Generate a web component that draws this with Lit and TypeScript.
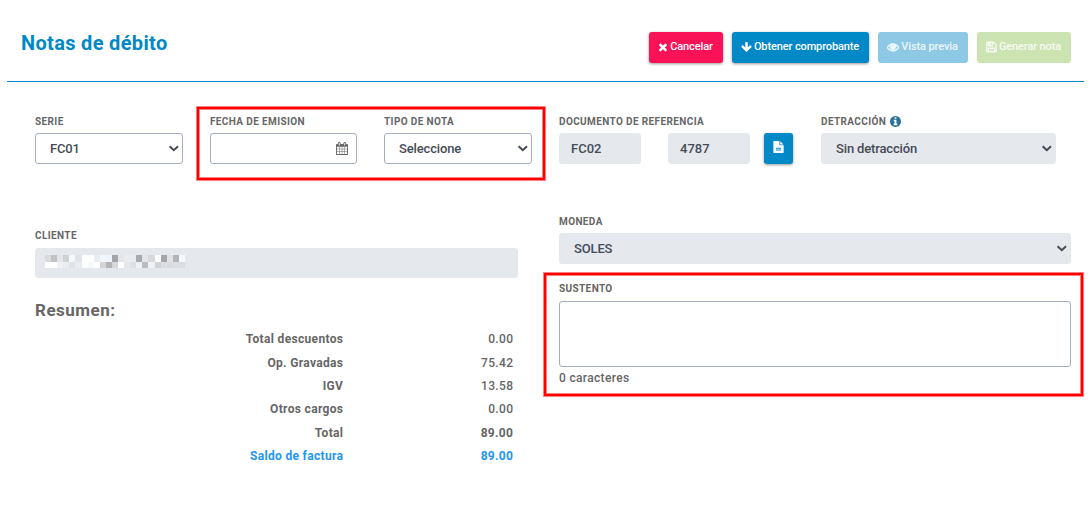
import { LitElement, html, css, svg } from "lit";
import { customElement } from "lit/decorators.js";

const icons: Record<string, any> = {
  times: { box: "0 0 1408 1792", w: 10, d: "M1298 1322q0 40-28 68l-136 136q-28 28-68 28t-68-28l-294-294-294 294q-28 28-68 28t-68-28l-136-136q-28-28-28-68t28-68l294-294-294-294q-28-28-28-68t28-68l136-136q28-28 68-28t68 28l294 294 294-294q28-28 68-28t68 28l136 136q28 28 28 68t-28 68l-294 294 294 294q28 28 28 68z" },
  down: { box: "0 0 1664 1792", w: 11, d: "M1611 832q0 53-37 90l-651 652q-39 37-91 37-53 0-90-37L91 922q-38-36-38-90 0-53 38-91l74-75q39-37 91-37 53 0 90 37l294 294V256q0-52 38-90t90-38h128q52 0 90 38t38 90v704l294-294q37-37 90-37 52 0 91 37l75 75q37 39 37 91z" },
  eye: { box: "0 0 1792 1792", w: 12, bold: 90, d: "M1664 960q-152-236-381-353 61 104 61 225 0 185-131.500 316.500t-316.500 131.500-316.500-131.500-131.500-316.500q0-121 61-225-229 117-381 353 133 205 333.500 326.500t434.500 121.500 434.500-121.500 333.500-326.500zm-720-384q0-20-14-34t-34-14q-125 0-214.500 89.500t-89.500 214.500q0 20 14 34t34 14 34-14 14-34q0-86 61-147t147-61q20 0 34-14t14-34zm848 384q0 34-20 69-140 230-376.500 368.500t-499.500 138.500-499.500-139-376.500-368q-20-35-20-69t20-69q140-229 376.500-368t499.500-139 499.500 139 376.500 368q20 35 20 69z" },
  save: { box: "128 0 1536 1792", w: 11, bold: 70, d: "M512 1536h768v-384h-768v384zm896 0h128v-896q0-14-10-38.500t-20-34.500l-281-281q-10-10-34-20t-39-10v416q0 40-28 68t-68 28h-576q-40 0-68-28t-28-68v-416h-128v1280h128v-416q0-40 28-68t68-28h832q40 0 68 28t28 68v416zm-384-928v-320q0-13-9.500-22.500t-22.500-9.500h-192q-13 0-22.500 9.500t-9.500 22.500v320q0 13 9.500 22.500t22.500 9.500h192q13 0 22.500-9.500t9.500-22.500zm640 32v928q0 40-28 68t-68 28h-1344q-40 0-68-28t-28-68v-1344q0-40 28-68t68-28h928q40 0 88 20t76 48l280 280q28 28 48 76t20 88z" },
  calendar: { box: "64 0 1664 1792", w: 12, d: "M192 1664h288v-288h-288v288zm352 0h320v-288h-320v288zm-352-352h288v-320h-288v320zm352 0h320v-320h-320v320zm-352-384h288v-288h-288v288zm736 736h320v-288h-320v288zm-384-736h320v-288h-320v288zm768 736h288v-288h-288v288zm-384-352h320v-320h-320v320zm-352-864v-288q0-13-9.500-22.500t-22.500-9.500h-64q-13 0-22.500 9.500t-9.500 22.500v288q0 13 9.500 22.500t22.500 9.500h64q13 0 22.500-9.500t9.500-22.500zm736 864h288v-320h-288v320zm-384-384h320v-288h-320v288zm384 0h288v-288h-288v288zm32-480v-288q0-13-9.500-22.500t-22.500-9.500h-64q-13 0-22.500 9.500t-9.500 22.500v288q0 13 9.500 22.500t22.500 9.500h64q13 0 22.500-9.500t9.500-22.500zm384-64v1280q0 52-38 90t-90 38h-1408q-52 0-90-38t-38-90v-1280q0-52 38-90t90-38h128v-96q0-66 47-113t113-47h64q66 0 113 47t47 113v96h384v-96q0-66 47-113t113-47h64q66 0 113 47t47 113v96h128q52 0 90 38t38 90z" },
  file: { box: "128 0 1536 1792", w: 11, d: "M1596 476q14 14 28 36h-472v-472q22 14 36 28zm-476 164h544v1056q0 40-28 68t-68 28h-1344q-40 0-68-28t-28-68v-1600q0-40 28-68t68-28h800v544q0 40 28 68t68 28zm160 736v-64q0-14-9-23t-23-9h-704q-14 0-23 9t-9 23v64q0 14 9 23t23 9h704q14 0 23-9t9-23zm0-256v-64q0-14-9-23t-23-9h-704q-14 0-23 9t-9 23v64q0 14 9 23t23 9h704q14 0 23-9t9-23z" },
  info: { box: "128 128 1536 1536", w: 11, d: "M1152 1376v-160q0-14-9-23t-23-9h-96v-512q0-14-9-23t-23-9h-320q-14 0-23 9t-9 23v160q0 14 9 23t23 9h96v320h-96q-14 0-23 9t-9 23v160q0 14 9 23t23 9h448q14 0 23-9t9-23zm-128-896v-160q0-14-9-23t-23-9h-192q-14 0-23 9t-9 23v160q0 14 9 23t23 9h192q14 0 23-9t9-23zm640 416q0 209-103 385.500t-279.500 279.500-385.500 103-385.500-103-279.500-279.500-103-385.500 103-385.500 279.500-279.500 385.500-103 385.500 103 279.500 279.500 103 385.500z" },
};

const icon = (name: string) => {
  const i = icons[name];
  return html`<svg class="ico" width=${i.w} height="12" viewBox=${i.box} fill="currentColor" aria-hidden="true">${svg`<path stroke="currentColor" stroke-width=${i.bold ?? 0} d=${i.d}></path>`}</svg>`;
};

const chevron = html`<svg class="chev" width="11" height="7" viewBox="0 0 11 7" fill="none" stroke="currentColor" stroke-width="2"><path d="M1.600 1.200L5.800 5.200L10 1.200"></path></svg>`;

const mosaic = [
  ["#d8dadf", "#c0c2c6", "#e2e5ea", "#cfd1d5", "#f4f8fd", "#e0e3e9", "#ffffff", "#ffffff", "#eaedf2", "#f3f7fc", "#eff4fa", "#a3a5aa", "#e2e5e9", "#e9ecf1", "#e8ebf0", "#a8aaaf", "#e2e5ea", "#d6d8dc", "#fdfeff", "#a5a7ac", "#dfe2e7", "#b2b4b8", "#f5faff"],
  ["#ffffff", "#ffffff", "#eef1f6", "#eaedf2", "#dfe2e7", "#eaedf3", "#ffffff", "#f4f9fe", "#ffffff", "#d2d4d8", "#b3b5b9", "#d6d8dc", "#ffffff", "#e4e7ec", "#dcdfe4", "#eef1f6", "#bbbdc1", "#eff3f8", "#d1d3d7", "#dcdee2", "#d9dbdf", "#dcdee2", "#dadde2"],
];

const summary = [
  ["Total descuentos", "0.00", ""],
  ["Op. Gravadas", "75.42", ""],
  ["IGV", "13.58", ""],
  ["Otros cargos", "0.00", ""],
  ["Total", "89.00", "strong"],
  ["Saldo de factura", "89.00", "strong due"],
];

@customElement("app-root")
export class AppRoot extends LitElement {
  static styles = css`
    :host { display: block; position: relative; width: 1091px; height: 507px; overflow: hidden; background: #fff; color: #666; font: 500 13px/20px Roboto, sans-serif; }
    * { box-sizing: border-box; }
    svg { display: block; flex: none; }
    header { margin: 0 7px; height: 82px; border-bottom: 1px solid #0088c7; padding: 32px 13px 0 14px; display: flex; justify-content: space-between; align-items: flex-start; }
    h1 { margin: -1px 0 0; font-size: 20px; line-height: 24px; font-weight: 700; letter-spacing: 0.33px; color: #0088c7; }
    .actions { display: flex; gap: 9px; }
    .btn { height: 31px; padding: 0 1px 2px 0; border-radius: 3px; display: flex; align-items: center; justify-content: center; gap: 2px; color: #fff; font-size: 11px; letter-spacing: -0.12px; white-space: nowrap; box-shadow: 0 1px 3px rgba(0,0,0,.4); }
    .cancel { width: 74px; background: #fa1259; }
    .get { width: 137px; background: #0088c7; }
    .view { width: 90px; background: #8dc9e5; box-shadow: none; }
    .make { width: 94px; background: #cbe4b2; box-shadow: none; }
    .make, .view { color: rgba(255,255,255,.85); }
    main { display: grid; grid-template-columns: 483px 512px; column-gap: 41px; padding: 33px 0 0 35px; }
    .row { display: flex; align-items: flex-start; }
    .left { gap: 27px; }
    .left > div { flex: none; }
    .label { display: flex; align-items: center; height: 13px; margin-bottom: 5px; font-size: 10px; line-height: 13px; font-weight: 700; letter-spacing: 0.38px; gap: 3.500px; white-space: nowrap; }
    .label .ico { color: #2b7096; height: 11px; margin-top: -1px; }
    .box { height: 31px; border: 1px solid #a5aebd; border-radius: 3px; display: flex; align-items: center; justify-content: space-between; padding: 0 3px 0 14px; color: #464b55; letter-spacing: -0.15px; }
    .off { background: #e5e8ed; border-color: #e5e8ed; }
    .w148 { width: 148px; }
    .w147 { width: 147px; }
    .date { padding-right: 8px; color: #666; }
    .date .ico { height: 13px; }
    .doc { width: 82px; padding-left: 11px; letter-spacing: 0; }
    .gap { margin-left: 27px; }
    .filebtn { width: 29px; height: 31px; margin-left: 14px; border-radius: 3px; background: #0088c7; color: #fff; display: flex; align-items: center; justify-content: center; padding-bottom: 3px; box-shadow: 0 1px 3px rgba(0,0,0,.4); }
    .detr { width: 235px; margin-left: 28px; }
    .client { margin-top: 65px; }
    .client .label, .why .label { margin-bottom: 6px; }
    .client .box { height: 30px; padding: 0 9px; }
    .mosaic { display: grid; grid-template-columns: repeat(23, 1fr); grid-template-rows: 7px 6px; width: 140px; margin-bottom: 3px; }
    h2 { margin: 20px 0 0; font-size: 17px; line-height: 24px; font-weight: 700; letter-spacing: 0.5px; }
    .sum { margin-top: 6.300px; display: grid; grid-template-columns: 308.300px 170px; grid-auto-rows: 23.4px; text-align: right; line-height: 23px; font-size: 12px; letter-spacing: 0.33px; }
    .sum b { font-weight: 700; }
    .sum span { font-weight: 500; }
    .sum .strong { font-weight: 700; }
    .sum .due { color: #2196f3; }
    .money { margin-top: 51px; }
    .why { margin-top: 18px; }
    .area { height: 66px; border: 1px solid #a5aebd; border-radius: 3px; }
    .count { margin-top: 1px; font-size: 12px; letter-spacing: 0.33px; }
    .mark { position: absolute; border: 2px solid #f00; box-shadow: 0 0 0 1px rgba(255,0,0,.5), inset 0 0 0 1px rgba(255,0,0,.5); pointer-events: none; }
    .m1 { left: 197px; top: 107px; width: 348px; height: 73px; }
    .m2 { left: 544px; top: 273px; width: 539px; height: 123px; }
  `;

  render() {
    return html`
      <header>
        <h1>Notas de débito</h1>
        <div class="actions">
          <div class="btn cancel">${icon("times")}<span>Cancelar</span></div>
          <div class="btn get">${icon("down")}<span>Obtener comprobante</span></div>
          <div class="btn view">${icon("eye")}<span>Vista previa</span></div>
          <div class="btn make">${icon("save")}<span>Generar nota</span></div>
        </div>
      </header>
      <main>
        <section>
          <div class="row left">
            <div class="w148"><div class="label">SERIE</div><div class="box">FC01${chevron}</div></div>
            <div class="w147"><div class="label">FECHA DE EMISION</div><div class="box date"><span></span>${icon("calendar")}</div></div>
            <div class="w148"><div class="label">TIPO DE NOTA</div><div class="box">Seleccione${chevron}</div></div>
          </div>
          <div class="client">
            <div class="label">CLIENTE</div>
            <div class="box off"><div class="mosaic">${mosaic.flat().map((c) => html`<i style="background:${c}"></i>`)}</div></div>
          </div>
          <h2>Resumen:</h2>
          <div class="sum">${summary.map(([k, v, c]) => html`<b class=${c}>${k}</b><span class=${c}>${v}</span>`)}</div>
        </section>
        <section>
          <div class="row">
            <div>
              <div class="label">DOCUMENTO DE REFERENCIA</div>
              <div class="row"><div class="box off doc">FC02</div><div class="box off doc gap">4787</div><div class="filebtn">${icon("file")}</div></div>
            </div>
            <div class="detr"><div class="label">DETRACCIÓN ${icon("info")}</div><div class="box off">Sin detracción${chevron}</div></div>
          </div>
          <div class="money"><div class="label">MONEDA</div><div class="box off">SOLES${chevron}</div></div>
          <div class="why"><div class="label">SUSTENTO</div><div class="area"></div><div class="count">0 caracteres</div></div>
        </section>
      </main>
      <div class="mark m1"></div>
      <div class="mark m2"></div>
    `;
  }
}
